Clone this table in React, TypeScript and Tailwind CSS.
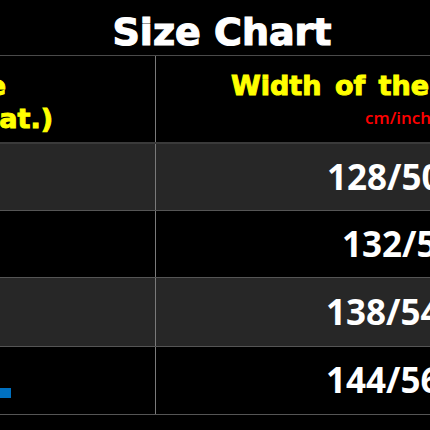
export default function App() {
  const rows = [
    { value: '128/50', pad: 'pl-[171px]', bg: 'bg-[#272727]', h: 'h-[67px]', square: false },
    { value: '132/52', pad: 'pl-[186px]', bg: 'bg-black', h: 'h-[67px]', square: false },
    { value: '138/54', pad: 'pl-[170px]', bg: 'bg-[#272727]', h: 'h-[69px]', square: false },
    { value: '144/56', pad: 'pl-[170px]', bg: 'bg-black', h: 'h-[68px]', square: true },
  ];

  return (
    <div className="w-[430px] h-[430px] bg-black overflow-hidden">
      {/* Title */}
      <div className="h-[56px] border-b border-[#4a4a4a] pt-[13px] pl-[14px] flex justify-center">
        <span
          className="text-[38px] leading-none font-bold text-white whitespace-nowrap [-webkit-text-stroke:1.2px_#ffffff]"
          style={{ fontFamily: '"DejaVu Sans", sans-serif' }}
        >
          Size Chart
        </span>
      </div>

      {/* Header row */}
      <div className="flex h-[88px] border-b-2 border-[#3a3a3a]">
        <div
          className="w-[156px] shrink-0 border-r border-[#7a7a7a] overflow-hidden pt-[16px] text-[27px] leading-none font-bold text-[#ffff00] [-webkit-text-stroke:1px_#ffff00]"
          style={{ fontFamily: '"DejaVu Sans", sans-serif' }}
        >
          <div className="w-[6px] flex justify-end whitespace-nowrap">Bust Size</div>
          <div className="w-[53px] flex justify-end whitespace-nowrap mt-[6px]">(Lay Flat.)</div>
        </div>
        <div className="flex-1 overflow-hidden pt-[16px]">
          <div
            className="pl-[75px] text-[27px] leading-none font-bold text-[#ffff00] whitespace-nowrap [word-spacing:4px] [-webkit-text-stroke:1px_#ffff00]"
            style={{ fontFamily: '"DejaVu Sans", sans-serif' }}
          >
            Width of the Garment
          </div>
          <div
            className="pl-[209px] mt-[10px] text-[17px] leading-none font-semibold text-[#ff0000] whitespace-nowrap"
            style={{ fontFamily: '"Open Sans", sans-serif' }}
          >
            cm/inch
          </div>
        </div>
      </div>

      {/* Data rows */}
      {rows.map((row) => (
        <div key={row.value} className={`flex ${row.h} ${row.bg} border-b border-[#555555]`}>
          <div className="w-[156px] shrink-0 border-r border-[#7a7a7a]">
            {row.square && <div className="mt-[41px] w-[11px] h-[10px] bg-[#0070c0]" />}
          </div>
          <div className={`flex-1 flex items-center overflow-hidden pb-[2px] ${row.pad}`}>
            <span
              className="text-[35px] leading-none font-bold text-white whitespace-nowrap"
              style={{ fontFamily: '"Open Sans", sans-serif' }}
            >
              {row.value}
            </span>
          </div>
        </div>
      ))}
    </div>
  );
}
